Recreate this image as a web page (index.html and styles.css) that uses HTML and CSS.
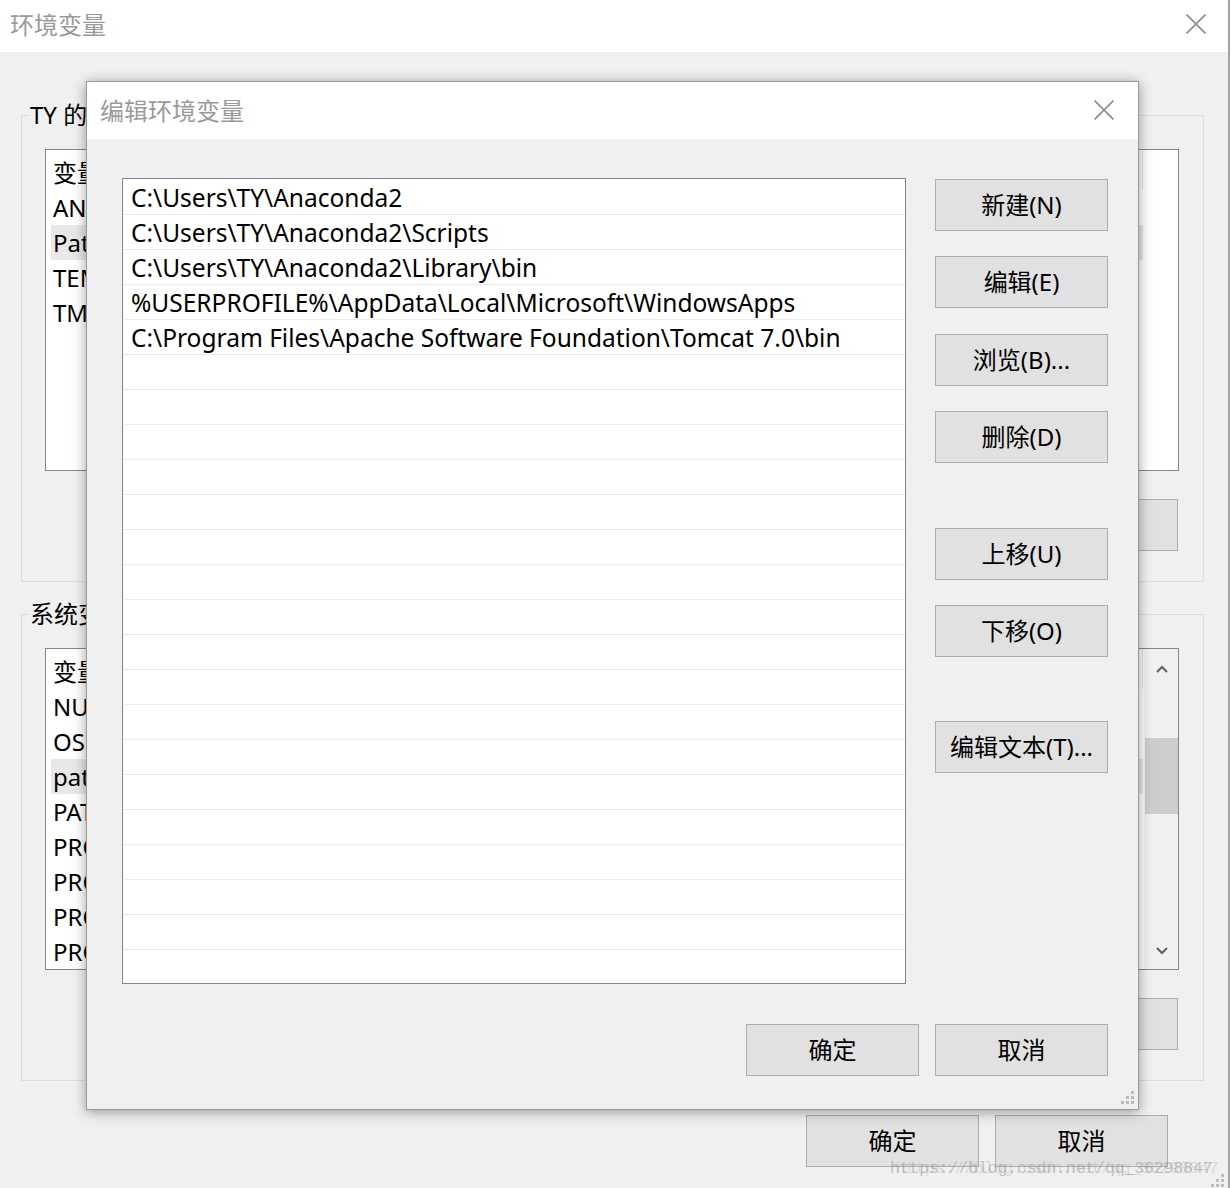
FILE: index.html
```html
<!DOCTYPE html>
<html lang="zh-CN">
<head>
<meta charset="utf-8">
<title>环境变量</title>
<link rel="stylesheet" href="styles.css">
</head>
<body>
<div class="window">
  <div class="titlebar">
    <span class="title">环境变量</span>
    <svg class="close" width="20" height="20" viewBox="0 0 20 20"><path d="M0.5 0.5 L19.5 19.5 M19.5 0.5 L0.5 19.5" stroke="#8c8c8c" stroke-width="1.6" fill="none"/></svg>
  </div>
  <div class="content">
    <div class="group">
      <span class="group-label">TY 的用户变量(U)</span>
      <div class="listview">
        <div class="lv-main wide">
          <div class="lv-header"><span class="lv-col1">变量</span><span class="lv-col2">值</span></div>
          <div class="lv-row"><span class="lv-col1">ANDROID_HOME</span></div>
          <div class="lv-row selected"><span class="lv-col1">Path</span></div>
          <div class="lv-row"><span class="lv-col1">TEMP</span></div>
          <div class="lv-row"><span class="lv-col1">TMP</span></div>
        </div>
      </div>
      <div class="btnrow">
        <button class="btn">新建(N)...</button>
        <button class="btn">编辑(E)...</button>
        <button class="btn">删除(D)</button>
      </div>
    </div>
    <div class="group group2">
      <span class="group-label">系统变量(S)</span>
      <div class="listview">
        <div class="lv-main">
          <div class="lv-header"><span class="lv-col1">变量</span><span class="lv-col2">值</span></div>
          <div class="lv-row"><span class="lv-col1">NUMBER_OF_PROCESSORS</span></div>
          <div class="lv-row"><span class="lv-col1">OS</span></div>
          <div class="lv-row selected"><span class="lv-col1">path</span></div>
          <div class="lv-row"><span class="lv-col1">PATHEXT</span></div>
          <div class="lv-row"><span class="lv-col1">PROCESSOR_ARCHITECTURE</span></div>
          <div class="lv-row"><span class="lv-col1">PROCESSOR_IDENTIFIER</span></div>
          <div class="lv-row"><span class="lv-col1">PROCESSOR_LEVEL</span></div>
          <div class="lv-row"><span class="lv-col1">PROCESSOR_REVISION</span></div>
        </div>
        <div class="scrollbar">
          <div class="sb-btn"><svg width="12" height="8" viewBox="0 0 12 8"><path d="M1 7 L6 2 L11 7" stroke="#606060" stroke-width="2" fill="none"/></svg></div>
          <div class="sb-thumb"></div>
          <div class="sb-space"></div>
          <div class="sb-btn sb-down"><svg width="12" height="8" viewBox="0 0 12 8"><path d="M1 1 L6 6 L11 1" stroke="#606060" stroke-width="2" fill="none"/></svg></div>
        </div>
      </div>
      <div class="btnrow">
        <button class="btn">新建(W)...</button>
        <button class="btn">编辑(I)...</button>
        <button class="btn">删除(L)</button>
      </div>
    </div>
    <div class="footer">
      <button class="btn">确定</button>
      <button class="btn">取消</button>
    </div>
  </div>
  <svg class="grip win-grip" width="13" height="13" viewBox="0 0 13 13"><g fill="#bcbcbc"><rect x="10" y="0" width="3" height="3"/><rect x="5" y="5" width="3" height="3"/><rect x="10" y="5" width="3" height="3"/><rect x="0" y="10" width="3" height="3"/><rect x="5" y="10" width="3" height="3"/><rect x="10" y="10" width="3" height="3"/></g></svg>
</div>

<div class="dialog">
  <div class="dlg-title">
    <span class="title">编辑环境变量</span>
    <svg class="close" width="20" height="20" viewBox="0 0 20 20"><path d="M0.5 0.5 L19.5 19.5 M19.5 0.5 L0.5 19.5" stroke="#8c8c8c" stroke-width="1.6" fill="none"/></svg>
  </div>
  <div class="dlg-body">
    <div class="dlg-main">
      <div class="pathlist">
        <div class="prow">C:\Users\TY\Anaconda2</div>
        <div class="prow">C:\Users\TY\Anaconda2\Scripts</div>
        <div class="prow">C:\Users\TY\Anaconda2\Library\bin</div>
        <div class="prow">%USERPROFILE%\AppData\Local\Microsoft\WindowsApps</div>
        <div class="prow">C:\Program Files\Apache Software Foundation\Tomcat 7.0\bin</div>
        <div class="prow"></div><div class="prow"></div><div class="prow"></div><div class="prow"></div><div class="prow"></div>
        <div class="prow"></div><div class="prow"></div><div class="prow"></div><div class="prow"></div><div class="prow"></div>
        <div class="prow"></div><div class="prow"></div><div class="prow"></div><div class="prow"></div><div class="prow"></div>
        <div class="prow"></div><div class="prow"></div><div class="prow"></div>
      </div>
      <div class="btncol">
        <button class="btn b1">新建(N)</button>
        <button class="btn b2">编辑(E)</button>
        <button class="btn b3">浏览(B)...</button>
        <button class="btn b4">删除(D)</button>
        <button class="btn b5">上移(U)</button>
        <button class="btn b6">下移(O)</button>
        <button class="btn b7">编辑文本(T)...</button>
      </div>
    </div>
    <div class="dlg-footer">
      <button class="btn">确定</button>
      <button class="btn">取消</button>
    </div>
  </div>
  <svg class="grip dlg-grip" width="13" height="13" viewBox="0 0 13 13"><g fill="#bcbcbc"><rect x="10" y="0" width="3" height="3"/><rect x="5" y="5" width="3" height="3"/><rect x="10" y="5" width="3" height="3"/><rect x="0" y="10" width="3" height="3"/><rect x="5" y="10" width="3" height="3"/><rect x="10" y="10" width="3" height="3"/></g></svg>
</div>

<div class="watermark">https://blog.csdn.net/qq_36298847</div>
</body>
</html>
```

FILE: styles.css
```css
* { box-sizing: border-box; }
html, body { margin: 0; padding: 0; }
body {
  width: 1231px;
  height: 1188px;
  background: #ffffff;
  position: relative;
  overflow: hidden;
  font-family: "Noto Sans", "Noto Sans CJK SC", sans-serif;
  font-size: 24px;
  color: #000;
}

.window {
  width: 1230px;
  height: 1188px;
  border-right: 2px solid #a5a5a5;
  background: #f0f0f0;
  position: relative;
  display: flex;
  flex-direction: column;
}

.titlebar {
  height: 52px;
  flex: none;
  background: #ffffff;
  display: flex;
  align-items: center;
  justify-content: space-between;
  padding: 0 22px 4px 10px;
}

.title {
  font-family: "Noto Sans CJK SC", sans-serif;
  font-size: 24px;
  color: #9a9a9a;
  line-height: 30px;
}

.close { display: block; }

.content {
  padding: 63px 24px 0 21px;
}

.group {
  position: relative;
  border: 1px solid #dcdcdc;
  padding: 33px 24px 30px 23px;
}

.group2 { margin-top: 32px; }

.group-label {
  position: absolute;
  top: -17px;
  left: 7px;
  padding: 0 1px;
  background: #f0f0f0;
  line-height: 32px;
}

.listview {
  height: 322px;
  border: 1px solid #828790;
  background: #ffffff;
  display: flex;
  overflow: hidden;
}

.lv-main {
  flex: 1;
  padding-left: 5px;
  padding-right: 1px;
}
.lv-main.wide { padding-right: 35px; }

.lv-header {
  height: 40px;
  display: flex;
  align-items: center;
  border-right: 1px solid #e5e5e5;
  padding-top: 2px;
}

.lv-row {
  height: 35px;
  display: flex;
  align-items: center;
}
.lv-row.selected { background: #e8e8e8; }

.lv-col1 { padding-left: 2px; width: 300px; white-space: nowrap; }
.lv-col2 { padding-left: 2px; }

.scrollbar {
  width: 34px;
  background: #f0f0f0;
  border-left: 1px solid #f5f5f5;
  display: flex;
  flex-direction: column;
}
.sb-btn {
  height: 40px;
  display: flex;
  align-items: center;
  justify-content: center;
}
.sb-down { height: 36px; }
.sb-thumb {
  margin-top: 49px;
  height: 76px;
  background: #cdcdcd;
}
.sb-space { flex: 1; }

.btnrow {
  margin-top: 28px;
  display: flex;
  justify-content: flex-end;
  gap: 17px;
  padding-right: 1px;
}

.btn {
  width: 173px;
  height: 52px;
  flex: none;
  margin: 0;
  padding: 0 0 3px 0;
  background: #e1e1e1;
  border: 1px solid #adadad;
  font-family: "Noto Sans", "Noto Sans CJK SC", sans-serif;
  font-size: 24px;
  color: #000;
  display: flex;
  align-items: center;
  justify-content: center;
  white-space: nowrap;
}

.footer {
  margin-top: 34px;
  display: flex;
  justify-content: flex-end;
  gap: 16px;
  padding-right: 36px;
}

.grip { position: absolute; }
.win-grip { right: 4px; bottom: 1px; }

/* dialog overlay */
.dialog {
  position: absolute;
  left: 86px;
  top: 81px;
  width: 1053px;
  height: 1029px;
  border: 1px solid #9a9a9a;
  background: #f0f0f0;
  box-shadow: 0 2px 12px rgba(0, 0, 0, 0.38);
  display: flex;
  flex-direction: column;
}

.dlg-title {
  height: 57px;
  flex: none;
  background: #ffffff;
  display: flex;
  align-items: center;
  justify-content: space-between;
  padding: 0 24px 2px 13px;
}

.dlg-body {
  padding: 39px 30px 33px 35px;
  display: flex;
  flex-direction: column;
}

.dlg-main {
  display: flex;
  gap: 29px;
}

.pathlist {
  width: 784px;
  height: 806px;
  border: 1px solid #828790;
  background: #ffffff;
  padding-top: 1px;
  overflow: hidden;
}

.prow {
  height: 35px;
  border-bottom: 1px solid #ebebeb;
  padding-left: 8px;
  display: flex;
  align-items: center;
  white-space: nowrap;
  font-size: 24.5px;
}

.btncol {
  display: flex;
  flex-direction: column;
}
.btncol .b1 { margin-top: 1px; }
.btncol .b2 { margin-top: 25px; }
.btncol .b3 { margin-top: 26px; }
.btncol .b4 { margin-top: 25px; }
.btncol .b5 { margin-top: 65px; }
.btncol .b6 { margin-top: 25px; }
.btncol .b7 { margin-top: 64px; }

.dlg-footer {
  margin-top: 40px;
  display: flex;
  justify-content: flex-end;
  gap: 16px;
}

.dlg-grip { right: 4px; bottom: 5px; }

.watermark {
  position: absolute;
  left: 890px;
  top: 1157px;
  font-family: "Liberation Mono", monospace;
  font-size: 16.3px;
  line-height: 24px;
  color: rgba(150, 150, 150, 0.55);
  text-shadow: 6px 0 0 rgba(170, 170, 170, 0.35);
  white-space: nowrap;
}
```
